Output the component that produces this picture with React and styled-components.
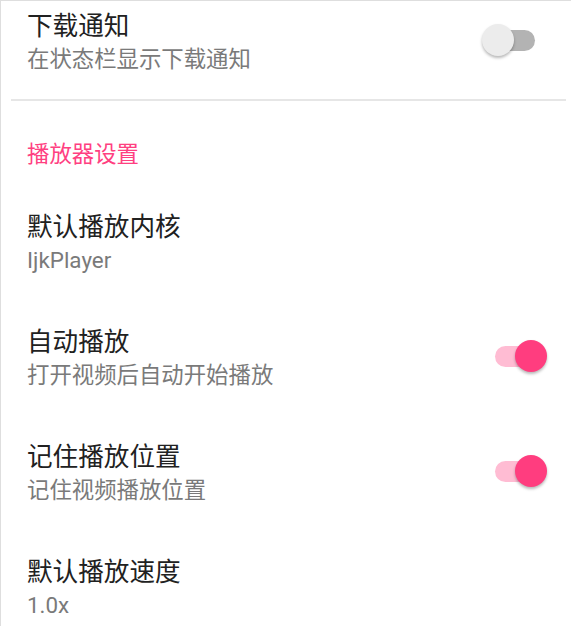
import styled, { createGlobalStyle } from "styled-components";

const GlobalStyle = createGlobalStyle`
  html, body {
    margin: 0;
    padding: 0;
    background: #ffffff;
  }
  * {
    box-sizing: border-box;
  }
`;

//Data
const sections = [
  {
    items: [
      { title: "下载通知", summary: "在状态栏显示下载通知", toggle: true, checked: false },
    ],
  },
  {
    header: "播放器设置",
    items: [
      { title: "默认播放内核", summary: "IjkPlayer" },
      { title: "自动播放", summary: "打开视频后自动开始播放", toggle: true, checked: true },
      { title: "记住播放位置", summary: "记住视频播放位置", toggle: true, checked: true },
      { title: "默认播放速度", summary: "1.0x" },
    ],
  },
];

const Switch = ({ checked }) => (
  <SwitchBox role="switch" aria-checked={checked}>
    <Track checked={checked} />
    <Thumb checked={checked} />
  </SwitchBox>
);

const App = () => {
  return (
    <>
      <GlobalStyle />
      <Frame>
        <List>
          {sections.map((section, i) => (
            <div key={i}>
              {i > 0 && <Divider />}
              {section.header && <Category>{section.header}</Category>}
              {section.items.map((item) => (
                <Row key={item.title}>
                  <Texts>
                    <Title>{item.title}</Title>
                    <Summary>{item.summary}</Summary>
                  </Texts>
                  {item.toggle && <Switch checked={item.checked} />}
                </Row>
              ))}
            </div>
          ))}
        </List>
      </Frame>
    </>
  );
};

const Frame = styled.div`
  width: 571px;
  height: 626px;
  overflow: hidden;
  border-top: 1px solid #dedede;
  border-left: 1px solid #dedede;
  background: #ffffff;
  font-family: Roboto, "Noto Sans CJK SC", "Noto Sans", sans-serif;
`;

const List = styled.div`
  margin-top: -17px;
`;

const Row = styled.div`
  height: 115px;
  display: flex;
  align-items: center;
  justify-content: space-between;
  padding: 0 24px 0 26px;
`;

const Texts = styled.div`
  display: flex;
  flex-direction: column;
`;

const Title = styled.div`
  font-size: 25.6px;
  line-height: 34px;
  color: #212121;
`;

const Summary = styled.div`
  font-size: 22.4px;
  line-height: 32px;
  color: #7a7a7a;
`;

const Divider = styled.div`
  height: 2px;
  margin: 0 5px 0 10px;
  background: #e6e6e6;
`;

const Category = styled.div`
  padding: 39px 26px 17px;
  font-size: 22.4px;
  line-height: 28px;
  color: #ff4081;
`;

const SwitchBox = styled.div`
  position: relative;
  width: 65px;
  height: 34px;
  margin-bottom: 4px;
  flex-shrink: 0;
`;

const Track = styled.div`
  position: absolute;
  left: 13px;
  top: 7px;
  width: 40px;
  height: 21px;
  border-radius: 10.5px;
  background: ${(p) => (p.checked ? "#ffbcd3" : "#b3b3b3")};
`;

const Thumb = styled.div`
  position: absolute;
  top: 1px;
  left: ${(p) => (p.checked ? "33px" : "0")};
  width: 32px;
  height: 32px;
  border-radius: 50%;
  background: ${(p) => (p.checked ? "#ff3d7f" : "#ececec")};
  box-shadow: 0 2px 3px rgba(0, 0, 0, 0.28);
`;

export default App;
